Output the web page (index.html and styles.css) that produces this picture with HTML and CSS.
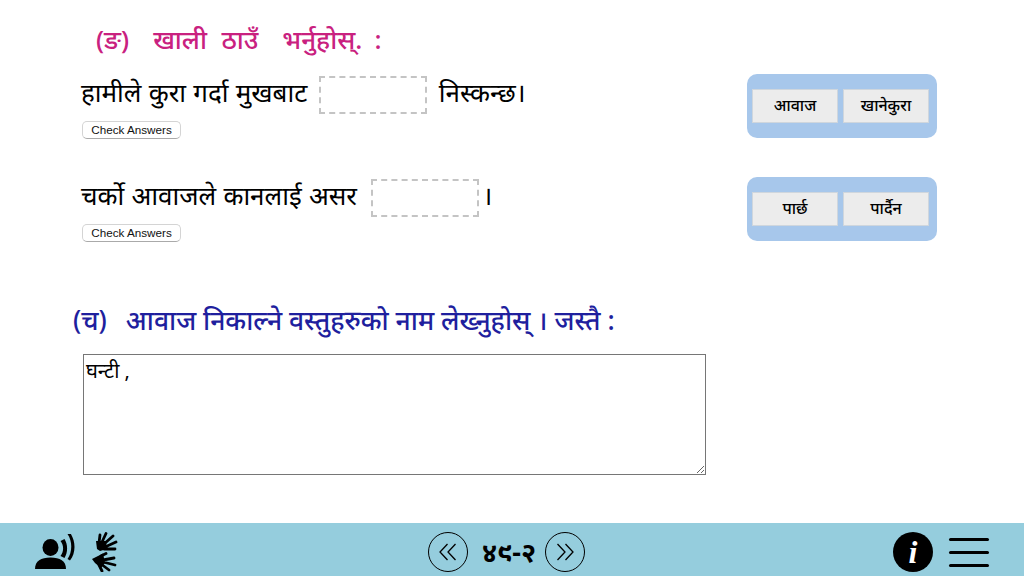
FILE: index.html
```html
<!DOCTYPE html>
<html lang="ne">
<head>
<meta charset="utf-8">
<title>खाली ठाउँ भर्नुहोस्</title>
<link rel="stylesheet" href="styles.css">
</head>
<body>
<main class="page">
  <h2 class="heading heading-pink">(ङ)<span class="gap"></span>खाली&nbsp; ठाउँ<span class="gap"></span>भर्नुहोस्. <span class="colon">:</span></h2>
  <section class="exercise">
    <div class="question">
      <p class="sentence">हामीले कुरा गर्दा मुखबाट <span class="blank"></span> निस्कन्छ।</p>
      <button class="check" type="button">Check Answers</button>
    </div>
    <div class="bank">
      <span class="word">आवाज</span>
      <span class="word">खानेकुरा</span>
    </div>
  </section>
  <section class="exercise exercise-second">
    <div class="question">
      <p class="sentence">चर्को आवाजले कानलाई असर <span class="blank blank-tight"></span> ।</p>
      <button class="check" type="button">Check Answers</button>
    </div>
    <div class="bank">
      <span class="word">पार्छ</span>
      <span class="word">पार्दैन</span>
    </div>
  </section>
  <h2 class="heading heading-blue">(च)<span class="gap-b"></span>आवाज निकाल्ने वस्तुहरुको नाम लेख्नुहोस् । जस्तै :</h2>
  <textarea class="answer">घन्टी ,</textarea>
</main>
<footer class="bar">
  <div class="bar-group">
    <svg class="icon-speak" viewBox="0 0 40 36" width="40" height="36" aria-hidden="true">
      <ellipse cx="15.500" cy="13.500" rx="8" ry="8.500" fill="#000"/>
      <path d="M0 35c0-8 6-11.500 15.500-11.500S31 27 31 35z" fill="#000"/>
      <path d="M25.500 7c3.500 4 3.500 11 0 15l4 2c3.500-5.500 3.500-13.500 0-19z" fill="#000"/>
      <path d="M32.500 0c5 7 5 18 0 25l2.500 1.500c6-8 6-19 0-28z" fill="#000"/>
    </svg>
    <svg class="icon-sign" viewBox="0 0 26 40" width="26" height="40" aria-hidden="true">
      <g stroke="#000" stroke-linecap="round" fill="none" stroke-width="2.800">
        <path d="M7 11 8 3M10 10 14 1.500M12 12 21 4M13 15 24 10M12 17 23 17"/>
        <path d="M9 24 14 21.500M11 28 22 26M11 30 23 33M9 32 17 38M7 33 10 39"/>
      </g>
      <path d="M4 9 14 9 15 17 8 19 5 17z" fill="#000"/>
      <path d="M0 27 11 21.500 13 31 9 36 3 31z" fill="#000"/>
    </svg>
  </div>
  <nav class="pager">
    <button class="round" type="button" aria-label="अघिल्लो">
      <svg viewBox="0 0 18 18" width="18" height="18"><path d="M8.500 1 1 9l7.500 8M16.500 1 9 9l7.500 8" fill="none" stroke="#000" stroke-width="1.300"/></svg>
    </button>
    <span class="page-no">४९-२</span>
    <button class="round" type="button" aria-label="अर्को">
      <svg viewBox="0 0 18 18" width="18" height="18"><path d="M1.500 1 9 9l-7.500 8M9.500 1 17 9l-7.500 8" fill="none" stroke="#000" stroke-width="1.300"/></svg>
    </button>
  </nav>
  <div class="bar-group bar-right">
    <span class="info">i</span>
    <span class="menu"><i></i><i></i><i></i></span>
  </div>
</footer>
</body>
</html>
```
FILE: styles.css
```css
* { box-sizing: border-box; }
html, body { margin: 0; height: 100%; }
body {
  width: 1024px;
  height: 576px;
  overflow: hidden;
  background: #fff;
  display: flex;
  flex-direction: column;
  font-family: "Noto Sans", "Noto Sans Devanagari", "Liberation Sans", sans-serif;
  color: #000;
}
.page { flex: 1; padding: 20px 87px 0 83px; min-height: 0; }
.heading { margin: 0; font-size: 26px; line-height: 38px; font-weight: 500; }
.heading-pink { color: #c9217f; margin-left: 13px; word-spacing: 0.500px; }
.heading-blue { color: #1f1f9e; margin: 59px 0 15px -10px; font-size: 26.500px; }
.gap { display: inline-block; width: 24px; }
.gap-b { display: inline-block; width: 19px; }
.colon { margin-left: 5px; }
.exercise { display: flex; justify-content: space-between; align-items: flex-start; margin-top: 15px; }
.exercise-second { margin-top: 37px; }
.question { display: flex; flex-direction: column; align-items: flex-start; }
.sentence { margin: 0 0 7px -2px; font-size: 26px; line-height: 38px; white-space: nowrap; word-spacing: 0.500px; }
.blank { display: inline-block; width: 108px; height: 38px; margin: 0 5px 0 4px; border: 2px dashed #c4c4c4; vertical-align: middle; }
.blank-tight { margin: 0 -4px 0 7px; }
.check {
  margin-left: -1px;
  padding: 0;
  width: 99px; height: 18px;
  font: 11.700px/16px "Liberation Sans", Arial, sans-serif;
  color: #111;
  background: #fff;
  border: 1px solid #d4d4d4;
  border-bottom-color: #aaa;
  border-radius: 5px;
}
.bank {
  display: flex; gap: 5px;
  width: 190px; height: 64px;
  margin-top: 1px;
  padding: 15px 8px 15px 5px;
  background: #a7c7eb;
  border-radius: 10px;
}
.word {
  flex: 1;
  display: flex; align-items: center; justify-content: center;
  padding-bottom: 2px;
  background: #ececec;
  border: 1px solid #cfd6dd;
  font-size: 16px;
  font-weight: 500;
}
.answer {
  display: block;
  width: 623px; height: 121px;
  padding: 3px 2px 2px;
  border: 1px solid #767676;
  font: 20px/26px "Noto Sans", "Noto Sans Devanagari", sans-serif;
  color: #000;
  border-radius: 0;
  outline: none;
}
.bar {
  flex: none;
  height: 53px;
  background: #95cddd;
  display: grid;
  grid-template-columns: 394px auto 1fr;
  align-items: center;
  padding: 5px 35px 0 34px;
}
.bar-group { display: flex; align-items: center; gap: 17px; }
.icon-speak { margin-left: 1px; }
.bar-right { justify-content: flex-end; gap: 16px; }
.pager { display: flex; align-items: center; gap: 12px; }
.round {
  width: 40px; height: 40px;
  padding: 0;
  display: flex; align-items: center; justify-content: center;
  border: 1.800px solid #000;
  border-radius: 50%;
  background: none;
}
.page-no { margin: 0 -3px 0 2px; font-size: 27px; font-weight: 700; line-height: 30px; }
.info {
  width: 40px; height: 40px;
  border-radius: 50%;
  background: #000;
  color: #fff;
  font: italic 700 32px/40px "Liberation Serif", serif;
  text-align: center;
}
.menu { display: flex; flex-direction: column; gap: 10px; width: 40px; }
.menu i { display: block; height: 3px; background: #000; border-radius: 2px; }
```
